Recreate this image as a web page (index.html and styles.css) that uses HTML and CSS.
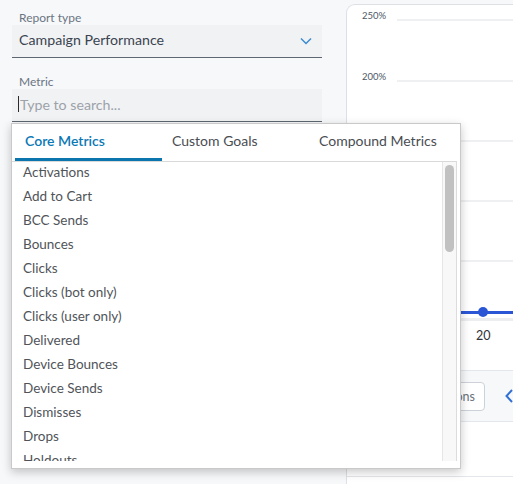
FILE: index.html
```html
<!DOCTYPE html>
<html>
<head>
<meta charset="utf-8">
<link rel="stylesheet" href="styles.css">
</head>
<body>
<div class="page">
  <aside class="sidebar">
    <div class="field">
      <div class="field-label">Report type</div>
      <div class="select">
        <span class="select-value">Campaign Performance</span>
        <svg class="chevron" width="12" height="8" viewBox="0 0 12 8"><path d="M1 1.5 L6 6.5 L11 1.5" fill="none" stroke="#3b8bd0" stroke-width="1.5"/></svg>
      </div>
    </div>
    <div class="field field-metric">
      <div class="field-label">Metric</div>
      <div class="input"><span class="caret"></span><span class="placeholder">Type to search...</span></div>
    </div>
  </aside>
  <main class="card">
    <div class="chart">
      <div class="grid-row"><span class="axis-label">250%</span><span class="grid-line"></span></div>
      <div class="grid-row"><span class="axis-label">200%</span><span class="grid-line"></span></div>
      <div class="grid-row"><span class="axis-label"></span><span class="grid-line"></span></div>
      <div class="grid-row"><span class="axis-label"></span><span class="grid-line"></span></div>
      <div class="grid-row"><span class="axis-label"></span><span class="grid-line"></span></div>
      <div class="series">
        <span class="series-line"></span>
        <span class="series-dot"></span>
      </div>
      <div class="x-axis"></div>
      <div class="x-labels"><span class="x-label">20</span></div>
    </div>
    <div class="toolbar">
      <button class="tool-btn">Annotations</button>
      <svg class="nav-prev" width="8" height="14" viewBox="0 0 8 14"><path d="M7 1 L1.5 7 L7 13" fill="none" stroke="#2f6fd6" stroke-width="2"/></svg>
    </div>
    <div class="table-area"><div class="table-head"></div></div>
  </main>
</div>

<div class="popup">
  <div class="tabs">
    <div class="tab active">Core Metrics</div>
    <div class="tab">Custom Goals</div>
    <div class="tab">Compound Metrics</div>
  </div>
  <div class="list-box">
    <ul class="list">
      <li>Activations</li>
      <li>Add to Cart</li>
      <li>BCC Sends</li>
      <li>Bounces</li>
      <li>Clicks</li>
      <li>Clicks (bot only)</li>
      <li>Clicks (user only)</li>
      <li>Delivered</li>
      <li>Device Bounces</li>
      <li>Device Sends</li>
      <li>Dismisses</li>
      <li>Drops</li>
      <li>Holdouts</li>
    </ul>
    <div class="scroll-track"><div class="scroll-thumb"></div></div>
  </div>
</div>
</body>
</html>
```
FILE: styles.css
```css
* { box-sizing: border-box; }
html, body { margin: 0; padding: 0; }
body {
  width: 513px;
  height: 484px;
  overflow: hidden;
  background: #f7f8fa;
  font-family: "Lato", "Liberation Sans", sans-serif;
  color: #3d4652;
  position: relative;
}
.page {
  display: flex;
  height: 484px;
  overflow: hidden;
}
.sidebar {
  width: 346px;
  flex: none;
  padding: 11px 24px 0 12px;
}
.field-label {
  font-size: 12px;
  line-height: 14px;
  color: #6b7582;
  padding-left: 7px;
}
.select, .input {
  height: 33px;
  background: #f1f2f4;
  border-bottom: 1px solid #5d6671;
  display: flex;
  align-items: center;
  padding: 0 10px 3px 7px;
}
.select-value {
  flex: 1;
  font-size: 14.2px;
  color: #3b4450;
}
.chevron { margin-top: 2px; }
.field-metric { margin-top: 17px; }
.input { padding-left: 6px; padding-bottom: 2px; }
.caret {
  width: 1px;
  height: 16px;
  background: #2b2b2b;
  margin-right: 1px;
}
.placeholder {
  font-size: 14.2px;
  color: #9ca2a9;
}

.card {
  flex: 1;
  min-width: 0;
  margin-top: 4px;
  background: #fff;
  border-left: 1px solid #dde0e4;
  border-top: 1px solid #dde0e4;
  border-top-left-radius: 9px;
  display: flex;
  flex-direction: column;
}
.chart {
  height: 365px;
  flex: none;
  padding-top: 5px;
  position: relative;
}
.grid-row {
  display: flex;
  height: 60px;
}
.grid-row:first-child { height: 61px; }
.axis-label {
  width: 50px;
  padding-left: 15px;
  font-size: 9.5px;
  color: #4d5866;
  line-height: 12px;
}
.grid-line {
  flex: 1;
  height: 2px;
  background: #eef0f2;
  margin-top: 9px;
}
.series {
  position: absolute;
  left: 0;
  right: 0;
  top: 302px;
  height: 10px;
}
.series-line {
  position: absolute;
  left: 0; right: 0; top: 4px;
  height: 3px;
  background: #2a56d6;
}
.series-dot {
  position: absolute;
  left: 131px;
  top: 0;
  width: 10px;
  height: 10px;
  border-radius: 50%;
  background: #2a56d6;
}
.x-axis {
  position: absolute;
  left: 50px; right: 0;
  top: 313px;
  height: 3px;
  background: #eceef0;
}
.x-labels {
  position: absolute;
  top: 319px;
  left: 129px;
}
.x-label {
  font-size: 12.5px;
  color: #2f3237;
}
.toolbar {
  height: 52px;
  flex: none;
  background: #f7f8fa;
  border-top: 1px solid #e3e6ea;
  border-bottom: 1px solid #e3e6ea;
  display: flex;
  align-items: center;
  justify-content: flex-end;
  gap: 20px;
  overflow: hidden;
}
.tool-btn {
  height: 29px;
  border: 1px solid #cdd2d8;
  border-radius: 4px;
  background: #fff;
  font-family: inherit;
  font-size: 12.5px;
  color: #6a7078;
  padding: 0 9px;
  flex: none;
}
.nav-prev { flex: none; }
.table-area {
  flex: 1;
  background: #fff;
}
.table-head {
  height: 55px;
  border-bottom: 1px solid #e3e6ea;
}

.popup {
  position: absolute;
  left: 11px;
  top: 123px;
  width: 450px;
  height: 346px;
  background: #fff;
  border: 1px solid #c9c9c9;
  box-shadow: 0 3px 9px rgba(0, 0, 0, 0.22);
  display: flex;
  flex-direction: column;
  padding: 0 3px 7px 0;
}
.tabs {
  display: flex;
  height: 37px;
  padding-left: 3px;
  flex: none;
}
.tab {
  width: 147px;
  padding: 0 10px;
  font-size: 14px;
  line-height: 34px;
  color: #4a4d52;
  border-bottom: 3px solid transparent;
}
.tab.active {
  color: #0b79b5;
  font-weight: 600;
  border-bottom-color: #0b75ad;
}
.list-box {
  flex: 1;
  display: flex;
  border-top: 1px solid #d9d9d9;
  border-right: 1px solid #dcdcdc;
  overflow: hidden;
  min-height: 0;
}
.list {
  flex: 1;
  list-style: none;
  margin: -2px 0 0 0;
  padding: 0 0 0 11px;
  overflow: hidden;
}
.list li {
  font-size: 13.5px;
  line-height: 24px;
  color: #505459;
  white-space: nowrap;
}
.scroll-track {
  width: 14px;
  flex: none;
  background: #f8f8f8;
  border-left: 1px solid #e6e6e6;
  padding: 3px 2px 0 2px;
}
.scroll-thumb {
  height: 87px;
  border-radius: 5px;
  background: #c1c1c1;
}
```
